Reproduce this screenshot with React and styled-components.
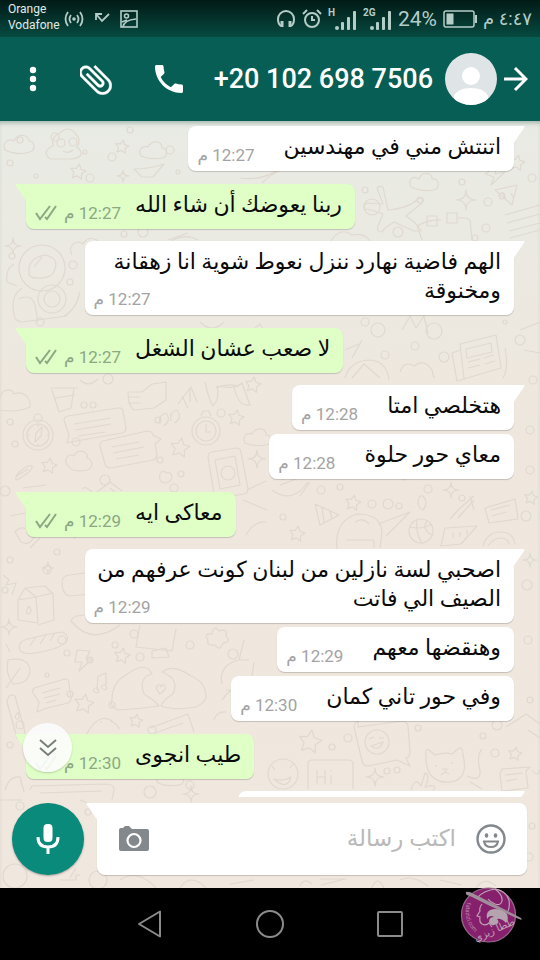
import React from 'react'
import styled, { createGlobalStyle } from 'styled-components'

const colors = {
  header: '#075e54',
  accent: '#0a8a7a',
  incoming: '#ffffff',
  outgoing: '#dfffc7',
  status: '#b4cdc7',
  nav: '#8b8b8b',
  icon: '#83888c',
  doodle: '#e0d9d0',
}

const messages = [
  { lines: ['اتنتش مني في مهندسين'], time: '12:27', first: true },
  { lines: ['ربنا يعوضك أن شاء الله'], time: '12:27', first: true, mine: true },
  { lines: ['الهم فاضية نهارد ننزل نعوط شوية انا زهقانة', 'ومخنوقة'], time: '12:27', first: true },
  { lines: ['لا صعب عشان الشغل'], time: '12:27', first: true, mine: true },
  { lines: ['هتخلصي امتا'], time: '12:28', first: true },
  { lines: ['معاي حور حلوة'], time: '12:28' },
  { lines: ['معاكى ايه'], time: '12:29', first: true, mine: true },
  { lines: ['اصحبي لسة نازلين من لبنان كونت عرفهم من', 'الصيف الي فاتت'], time: '12:29', first: true },
  { lines: ['وهنقضها معهم'], time: '12:29' },
  { lines: ['وفي حور تاني كمان'], time: '12:30' },
  { lines: ['طيب انجوى'], time: '12:30', first: true, mine: true },
]

const dots = [
  [20, 140, 3], [55, 137, 4], [85, 152, 2], [130, 130, 3], [112, 157, 4], [10, 163, 3], [36, 176, 2], [90, 178, 4],
  [170, 150, 4], [178, 172, 2], [372, 207, 8], [365, 190, 3], [420, 200, 3], [462, 182, 3], [488, 202, 4], [502, 196, 3],
  [398, 232, 5], [486, 228, 4], [475, 238, 3], [532, 178, 4], [124, 234, 3], [143, 232, 5], [12, 256, 3], [73, 265, 4],
  [70, 282, 3], [40, 322, 4], [365, 322, 4], [378, 330, 7], [434, 331, 8], [415, 346, 4], [444, 357, 5], [385, 355, 4],
  [505, 322, 2], [520, 340, 5], [10, 422, 3], [15, 444, 3], [84, 405, 3], [93, 405, 3], [108, 379, 5], [158, 420, 3],
  [221, 413, 4], [160, 460, 3], [76, 442, 4], [105, 480, 5], [181, 474, 3], [5, 491, 5], [174, 488, 4], [321, 490, 4],
  [340, 487, 3], [372, 504, 4], [388, 504, 5], [399, 506, 3], [428, 489, 4], [404, 477, 3], [462, 498, 3], [283, 517, 3],
  [526, 516, 5], [530, 470, 4], [10, 560, 3], [57, 552, 3], [47, 570, 4], [5, 590, 3], [62, 640, 4], [90, 660, 3],
  [115, 645, 3], [134, 634, 4], [67, 653, 3], [140, 657, 4], [47, 675, 2], [70, 694, 3], [112, 705, 3], [190, 645, 4],
  [233, 654, 5], [152, 730, 4], [20, 725, 4], [10, 745, 3], [150, 792, 6], [190, 785, 4], [348, 738, 4], [332, 747, 3],
  [418, 728, 3], [497, 725, 5], [483, 736, 3], [387, 771, 3], [397, 770, 3], [495, 753, 4], [530, 700, 3], [532, 826, 3],
  [529, 857, 4], [88, 812, 3], [20, 806, 4], [533, 380, 4], [530, 430, 4], [527, 585, 5], [528, 640, 4],
]

const stars = [
  [78, 172, 8], [122, 147, 7], [49, 466, 8], [180, 448, 10], [236, 418, 8], [353, 503, 8], [297, 534, 8], [122, 656, 8],
  [84, 704, 10], [136, 721, 7], [310, 742, 12], [515, 754, 7], [517, 163, 8], [531, 498, 7], [253, 385, 8],
]

const sparks = [
  [123, 176, 6], [466, 200, 10], [13, 246, 8], [451, 490, 8], [9, 627, 8], [48, 568, 6], [375, 777, 9], [191, 794, 8],
  [257, 459, 9], [150, 336, 8], [530, 560, 7],
]

const starPoints = (cx, cy, r) =>
  Array.from({ length: 10 }, (_, i) => {
    const radius = i % 2 ? r * 0.5 : r
    const angle = (Math.PI / 5) * i - 1.4
    return `${(cx + radius * Math.cos(angle)).toFixed(1)},${(cy + radius * Math.sin(angle)).toFixed(1)}`
  }).join(' ')

const sparkPath = (x, y, r) =>
  `M${x} ${y - r}Q${x} ${y} ${x + r} ${y}Q${x} ${y} ${x} ${y + r}Q${x} ${y} ${x - r} ${y}Q${x} ${y} ${x} ${y - r}Z`

const Doodles = () => (
  <Wallpaper viewBox='0 121 540 767' preserveAspectRatio='xMidYMid slice' aria-hidden='true'>
    {dots.map(([x, y, r]) => (
      <circle key={`${x}-${y}`} cx={x} cy={y} r={r} />
    ))}
    {stars.map(([x, y, r]) => (
      <polygon key={`${x}-${y}`} points={starPoints(x, y, r)} />
    ))}
    {sparks.map(([x, y, r]) => (
      <path key={`${x}-${y}`} d={sparkPath(x, y, r)} />
    ))}
    {/* clouds */}
    <path d='M5 150c-3-8 3-12 9-9c4-9 15-6 15 0c6 0 7 9 1 11q-13 4-25-2Z' />
    <path d='M141 156c-4-7 3-11 7-9c4-8 15-6 14 1c6 0 6 9 0 10q-12 2-21-2Z' />
    <path d='M411 187c-4-8 3-12 8-8c2-8 14-7 13 0c8-1 8 9 2 11q-12 2-23-3Z' />
    <path d='M68 466c-6-8 2-13 6-10c4-8 15-5 13 2c7 2 6 10 0 12q-14 3-19-4Z' />
    <path d='M245 443c-4-7 3-11 7-9c4-8 15-6 14 1c6 0 6 9 0 10q-12 2-21-2Z' />
    <path d='M0 398c2-10 12-10 14-4c10-4 17 4 16 13q-14 6-30 3' />
    <path d='M158 783c-4-7 3-11 7-9c4-8 15-6 14 1c6 0 6 9 0 10q-12 2-21-2Z' />
    <path d='M72 255c-5-10 5-16 11-11c5-9 17-6 17 3c9 1 8 12 2 14M330 242q10-16 22-7q14-3 20 9' />
    {/* face, boat and ribbons */}
    <path d='M60 133q8-8 15 0q7 7 2 14q10 9-4 12H50q-9-8 3-13q-2-9 7-13Z' />
    <circle cx='61' cy='143' r='4' />
    <circle cx='73' cy='142' r='4' />
    <path d='M63 151q6 3 10-1M134 169q15 0 30-5l-11 13h-11ZM240 178q30 4 48-18M350 184q-12 10-34 0M262 183q10-10 22-14' />
    {/* plane */}
    <path d='M377 188q6-5 7 4l4 18q22-2 31-12q7 0 3 5l-16 13q12 8 15 15h-7l-20-9q-10 6-12 10q-6 0-4-6l5-12q-10-4-18-5q-3-5 4-6l14 1Z' />
    {/* paper, pizza slice and stripes */}
    <path d='M417 226q12-7 24-6M458 218q8-1 12 2l2 20M417 226l5 14M427 216h10v10h-10ZM447 213h10v10h-10ZM495 190l22-5l-5 20ZM502 192l4 7M514 199l-3-6' />
    <path d='M505 215l35-10M507 223l33-9M509 231l31-8M510 238l30-8M485 174l12-8l-2 8l10-2l-14 13l3-8Z' />
    {/* astronaut */}
    <circle cx='42' cy='268' r='23' />
    <path d='M29 274q-2-16 16-19q14 3 10 14q-2 10-18 9q-7 0-8-4ZM34 267l8-10' />
    <circle cx='52' cy='299' r='14' />
    <circle cx='52' cy='299' r='8' />
    <path d='M22 288q-12 8-8 26q0 7 8 8l45-6M19 299q12-6 16 6l3 17M14 264q-9 5-7 18l10 4M80 292q-4 18-16 24M160 250q20-20 38-10M168 240l20-7' />
    {/* newspapers, letters */}
    <path d='M460 344l36-9l5 33l-37 11ZM466 349l25-6l1 9l-25 6ZM468 362l12-3M468 368l12-3M484 358l10-3M485 364l10-3M460 350l-8 3l5 28l8-2' />
    <path d='M402 330l8-14l6 12l8-12l4 18M345 378q5-18 26-18q16 2 18 20M352 378l12-14l16 14M520 330l20-8M524 350l16 3M505 348q4 20-2 30' />
    <path d='M400 372q4-12 14-6q10-8 18 4l2 8M345 350l14-6M362 340l-10 18M240 340l20-16l10 18ZM200 322q12 12 24 0' />
    {/* cup, fist, headset */}
    <path d='M52 390l7 22l12-4l3-20M50 388h28M55 398l20-3M80 380q8 8 18-1M128 392h14l10-8l14-2v18l-12 8l-20 2q-6-4-6-18ZM128 397h12M128 403h12' />
    <path d='M178 404l13-17l6 15M182 396l6 12M190 388v14M205 382q4 18 8 24q7-8 4-20q18 4 25-3q5 14 8 22q-12 2-16-18M216 388q10-5 22-2' />
    {/* compass and watch */}
    <circle cx='38' cy='435' r='15' />
    <circle cx='38' cy='435' r='11' />
    <circle cx='38' cy='418' r='4' />
    <path d='M35 442l1-9l6-6l-1 9ZM38 425v2M38 444v2M28 435h2M47 435h2' />
    <circle cx='206' cy='431' r='14' />
    <circle cx='206' cy='431' r='10' />
    <path d='M206 424v8h5M201 416l2-5h6l2 5' />
    {/* chat cards */}
    <path d='M68 416l50-8q4-1 5 3l3 17q0 4-4 5l-46 8l-9 2l2-8l-5-15q0-3 4-4ZM74 424l37-6M75 430l36-6M78 436l27-4' />
    <path d='M103 441l44-10q5 0 6 4l8 4l-6 5l2 11q-1 4-4 5l-42 8q-5 0-6-4l-5-18q0-4 3-5ZM112 447l27-5M113 453l31-6M116 459l23-4' />
    <path d='M160 424q-2-9 6-11q6 8-3 13M171 421q-2-9 6-11q6 8-3 13M16 476q10-12 16-10q2 4-15 14q-4-2 3-6l8-5M160 474q3-5 6-1q5-2 6 4q-1 6-8 6q-6-2-4-9Z' />
    {/* phone */}
    <path d='M212 452l24-4q4 0 5 4l7 37q0 4-4 5l-25 4q-4 0-5-4l-6-37q0-4 4-5ZM215 460l20-4l5 29l-20 4Z' />
    <circle cx='228' cy='473' r='7' />
    <path d='M97 492l13-10l12 9M110 488l10 9M93 493q-8-8-10-4M247 490l19-9M23 488l23-3M243 500l24 10M10 516l15-3M246 535q8-14 20-13' />
    {/* cone, ball, helmet */}
    <path d='M315 504l24 11l-19 10ZM322 507l2 16M330 511l2 8M337 549q-3-28 20-35q24 0 25 18l-2 16M346 540h28v8M378 524l32-12l-24 24M355 522q8-5 14 2' />
    <circle cx='421' cy='531' r='12' />
    <path d='M410 527q12 3 22-3M417 520q-2 12 5 23M427 521q-6 8 5 14M445 528l32-2l-16 18l-20 2ZM453 533v5M460 532v5M467 530v5M450 519l8-9l16-14M458 518l16-18' />
    <path d='M485 508l30-9l3 20l-29 4ZM491 510l19-5M492 516l14-4M470 496l4 14M483 546q4-14 18-14q12 0 14 12M488 546q5-8 13-8q7 0 8 6' />
    <path d='M420 496q-5 10 3 14q6-7 0-14ZM272 490q20 15 36-8M280 485l16-6M300 496l10-14' />
    {/* carton, bottle */}
    <path d='M18 600l18-3l2 26l-20-3ZM36 597l17-4l1 27l-16 5M18 600l7-12l20-2l8 8M25 588l11 9M29 606q-5 7 0 8q4-2 0-8' />
    <path d='M3 575l6 5l-3 5l10-2l-4 12M62 583q0-8 8-8l22-3v22l-24 2q-6-4-6-13ZM71 623q0-6 6-7l15-2M30 548l10-10M15 532q8-9 20 2q-4 13-14 8ZM55 535h10q8-4 10 4' />
    <path d='M20 650q-4-9 12-12q14-4 30-6q7 2 5 9q-6 8-32 12q-12 2-15-3ZM30 646l6-9M40 644l6-9M50 641l5-8M10 652l-4-8M72 622q20 24 48 3M140 625l-4 22l36 4l4-22' />
    <path d='M152 651l14-3l3 9l-17 1ZM244 640l-5 20h10M238 660q-20 6-16 24' />
    <path d='M212 634q2-10 7-3q9-3 7 5q6 6-3 7q-3 9-8 2q-9 1-7-5q-5-7 4-6Z' />
    {/* leaf, note, crayon */}
    <path d='M8 660q22-4 22 12q-2 12-17 12q-8-10-5-24ZM6 688l14-20M77 650l13 1l-4 8h6l-13 12l3-9h-7ZM34 688l31-9q4 0 4 4l2 16q0 3-3 4l-21 5l-10 4l2-10l-6-9q-1-3 1-5ZM42 693l18-5M44 698l16-4M46 703l10-3' />
    <path d='M97 690l1-14l8-3v12M93 690q4-5 6 1q-2 4-6-1M101 687q4-5 6 1q-2 4-6-1M7 702q2-10 8-6l10 36q-2 7-8 6ZM15 717q4-9 4 0q-1 5-4 0' />
    {/* hands holding a heart */}
    <path d='M112 700q0-18 14-25q20-15 26-1q-14 3-8 20q10 6 15 12q-20 3-40 4q-10-3-7-10ZM206 697q0-15-15-21q-18-13-29-4q18 7 11 22q-9 5-12 12q14 5 35 1q9-4 10-10Z' />
    <path d='M160 694q-6-7-2-9q3-1 3 2q2-4 4-1q2 3-5 8ZM226 690h24l4-28M222 700q10-16 26-10M86 735q16-30 34-6M100 722h2M111 722h2M150 728l38-14l6 18M155 733l28-10M214 720q3-9 12-8' />
    {/* sticker, cat, greeting */}
    <path d='M358 727l44-6q5 0 6 5l2 26q0 5-4 6l4 8l-13-6l-29 6q-5 0-6-5l-8-34q0-4 4-6Z' />
    <circle cx='377' cy='742' r='12' />
    <path d='M371 746q8 6 12-4ZM369 739l5-2M379 738h5M308 789v-25q0-4 4-4h36q5 0 5 4v25M317 770v14M317 777h8M325 770v14M331 775v9M331 770v1' />
    <path d='M426 755q-1-7 3-5l6 5q9-3 17-1l7-6q4-1 4 7q6 24-12 27q-26 2-25-27ZM436 765v2M452 762v2M442 769h5l-2 3l-4 3M445 772l4 2M467 776q14 7 13-6q-4-14 2-21M470 782l12 7' />
    <circle cx='283' cy='774' r='15' />
    <path d='M274 779q9 3 17-2q-4 14-17 2ZM275 770l-3-4M290 768l3-4M502 769l28-2l-4 4l2 17l-26 3l-2-17ZM505 775l18-2M506 781l11-2M411 790q4-14 10-4l4-13q6 2 0 14q14-4 8 4M506 727l20-13l14 10' />
    <path d='M30 790l2-4l74-2q8 0 8 6l-2 10M40 793l62-2M5 790q4-14 15-13l4 15M0 800h22M56 774l7-22' />
    {/* strip below the composer */}
    <circle cx='15' cy='876' r='12' />
    <circle cx='98' cy='880' r='9' />
    <path d='M60 880h16v-5h4M120 880q18-12 36 8M180 888q10-16 26 0M230 884l24-4M300 886q4-9 12-2M320 879h26M321 885l24-6M372 888q5-14 12 0M400 880q12-6 28 6M440 880l22 5M476 888q8-12 20-2' />
    <path d='M80 800l14 6M70 878l6-10M532 770q6 8 8 0M528 730l12 8' />
  </Wallpaper>
)

const Signal = ({ label }) => (
  <svg width='29' height='24' viewBox='0 0 29 24' fill='currentColor' direction='ltr' aria-hidden='true'>
    <text x='0' y='9' fontSize='10' fontWeight='700' fontFamily='Roboto, sans-serif'>{label}</text>
    <circle cx='9' cy='21' r='2' />
    <rect x='13' y='15' width='3' height='8' rx='1' />
    <rect x='19' y='10' width='3' height='13' rx='1' />
    <rect x='25' y='4' width='3' height='19' rx='1' />
  </svg>
)

const Ticks = () => (
  <svg width='22' height='16' viewBox='0 0 22 16' fill='none' stroke='#8ca782' strokeWidth='2' aria-label='تم التسليم' role='img'>
    <path d='M1 8l4 6L15 1M10 12l2 2L21 1' />
  </svg>
)

const BubbleTail = ({ mine, color }) => (
  <Tail $mine={mine} $color={color} width='12' height='18' viewBox='0 0 12 18' aria-hidden='true'>
    <path d={mine ? 'M1 0H12V18L1 2Q0 0 1 0Z' : 'M11 0H0V18L11 2Q12 0 11 0Z'} />
  </Tail>
)

const Message = ({ lines, time, first, mine }) => (
  <Bubble $mine={mine} $first={first} $long={lines.length > 1}>
    {first && <BubbleTail mine={mine} color={mine ? colors.outgoing : colors.incoming} />}
    {lines.map((line) => (
      <MessageLine key={line}>{line}</MessageLine>
    ))}
    <Meta $mine={mine}>
      <time>{time} م</time>
      {mine && <Ticks />}
    </Meta>
  </Bubble>
)

const App = () => (
  <Page dir='rtl'>
    <GlobalStyle />
    <StatusBar>
      <StatusGroup $gap={6}>
        <Clock>٤:٤٧ م</Clock>
        <svg width='34' height='18' viewBox='0 0 34 18' fill='none' stroke='currentColor' strokeWidth='1.5' aria-hidden='true'>
          <rect x='1' y='1' width='30' height='16' rx='2' />
          <path d='M33 5v8' strokeWidth='2' />
          <rect x='3.5' y='3.5' width='7' height='11' fill='currentColor' stroke='none' />
        </svg>
        <Percent dir='ltr'>24%</Percent>
        <Signal label='2G' />
        <Signal label='H' />
        <svg width='20' height='20' viewBox='0 0 20 20' fill='none' stroke='currentColor' strokeWidth='2' aria-hidden='true'>
          <circle cx='10' cy='11' r='7' />
          <path d='M10 7v4h3M1 5l4-4M19 5l-4-4' />
        </svg>
        <svg width='20' height='20' viewBox='0 0 20 20' fill='none' stroke='currentColor' strokeWidth='2' aria-hidden='true'>
          <path d='M5 17Q2 15 2 10a8 8 0 0 1 16 0q0 5-3 7' />
          <path d='M6 12v6M14 12v6' strokeWidth='3' />
        </svg>
      </StatusGroup>
      <StatusGroup $gap={10}>
        <svg width='18' height='18' viewBox='0 0 18 18' fill='none' stroke='currentColor' strokeWidth='1.6' aria-hidden='true'>
          <rect x='1' y='1' width='16' height='16' />
          <circle cx='6.5' cy='6' r='2' />
          <path d='M3 17Q4 10 16 9M2 12l5-2' />
        </svg>
        <svg width='16' height='18' viewBox='0 0 16 18' fill='none' stroke='currentColor' strokeWidth='1.8' aria-hidden='true'>
          <path d='M2 10V4h6M2 4l6 7l7-7' />
        </svg>
        <StatusGroup $gap={4}>
          <svg width='20' height='18' viewBox='0 0 20 18' fill='none' stroke='currentColor' strokeWidth='1.8' aria-hidden='true'>
            <circle cx='10' cy='9' r='1.8' fill='currentColor' stroke='none' />
            <path d='M7 5q-3 4 0 8M13 5q3 4 0 8M4 2q-5 7 0 14M16 2q5 7 0 14' />
          </svg>
          <Carriers dir='ltr'>
            <span>Orange</span>
            <span>Vodafone</span>
          </Carriers>
        </StatusGroup>
      </StatusGroup>
    </StatusBar>

    <Header>
      <IconButton aria-label='رجوع'>
        <svg width='25' height='26' viewBox='0 0 25 26' fill='none' stroke='#fff' strokeWidth='3'>
          <path d='M1 13h22M12 2l11 11l-11 11' />
        </svg>
      </IconButton>
      <Avatar viewBox='0 0 52 52' aria-hidden='true'>
        <clipPath id='avatar'>
          <circle cx='26' cy='26' r='26' />
        </clipPath>
        <g clipPath='url(#avatar)'>
          <rect width='52' height='52' fill='#dfe5e7' />
          <circle cx='26' cy='23' r='9' fill='#fff' />
          <path d='M9 52V43Q13 35 26 35T43 43V52Z' fill='#fff' />
        </g>
      </Avatar>
      <Title dir='ltr'>+20 102 698 7506</Title>
      <Actions>
        <IconButton aria-label='اتصال'>
          <svg width='28' height='28' viewBox='3 3 18 18' fill='#fff'>
            <path d='M6.62 10.79c1.44 2.83 3.76 5.14 6.59 6.59l2.2-2.2c.27-.27.67-.36 1.02-.24 1.12.37 2.33.57 3.57.57.55 0 1 .45 1 1V20c0 .55-.45 1-1 1-9.39 0-17-7.61-17-17 0-.55.45-1 1-1h3.5c.55 0 1 .45 1 1 0 1.25.2 2.45.57 3.57.11.35.03.74-.25 1.02l-2.2 2.2z' />
          </svg>
        </IconButton>
        <IconButton aria-label='إرفاق'>
          <svg width='32' height='32' viewBox='3 2.5 19 19' fill='#fff' stroke='#fff' strokeWidth='0.2'>
            <path
              transform='rotate(-45 12.5 12)'
              d='M16.5 6v11.500c0 2.210-1.790 4-4 4s-4-1.790-4-4V5a2.500 2.500 0 0 1 5 0v10.500c0 .55-.45 1-1 1s-1-.45-1-1V6H10v9.500a2.500 2.500 0 0 0 5 0V5c0-2.210-1.790-4-4-4S7 2.790 7 5v12.500c0 3.040 2.460 5.500 5.500 5.500s5.500-2.460 5.500-5.500V6h-1.500z'
            />
          </svg>
        </IconButton>
        <IconButton aria-label='المزيد'>
          <svg width='8' height='26' viewBox='0 0 8 26' fill='#fff'>
            <circle cx='4' cy='4' r='3.2' />
            <circle cx='4' cy='13' r='3.2' />
            <circle cx='4' cy='22' r='3.2' />
          </svg>
        </IconButton>
      </Actions>
    </Header>

    <Chat>
      <Doodles />
      <MessageList>
        {messages.map((message) => (
          <Message key={message.lines[0]} {...message} />
        ))}
        <NextBubble $first>
          <BubbleTail color={colors.incoming} />
        </NextBubble>
      </MessageList>
      <ScrollDown aria-label='الانتقال إلى الأسفل'>
        <svg width='18' height='18' viewBox='0 0 18 18' fill='none' stroke='#77807c' strokeWidth='2'>
          <path d='M1 1l8 7l8-7M1 9l8 7l8-7' />
        </svg>
      </ScrollDown>
      <Composer>
        <InputBox>
          <BubbleTail mine color={colors.incoming} />
          <IconButton aria-label='رموز تعبيرية'>
            <svg width='30' height='30' viewBox='0 0 30 30' fill='none' stroke={colors.icon} strokeWidth='2.4'>
              <circle cx='15' cy='15' r='13.5' />
              <ellipse cx='10.5' cy='11.5' rx='1.8' ry='2.3' fill={colors.icon} stroke='none' />
              <ellipse cx='19.5' cy='11.5' rx='1.8' ry='2.3' fill={colors.icon} stroke='none' />
              <path d='M8 17.5h14q-1 5.5-7 5.5t-7-5.5Z' strokeWidth='2' />
            </svg>
          </IconButton>
          <TextInput aria-label='اكتب رسالة' placeholder='اكتب رسالة' />
          <IconButton aria-label='كاميرا'>
            <svg width='32' height='28' viewBox='0 0 32 28'>
              <path d='M1 5q0-2 2-2h2l2-2h4l3 3h15q2 0 2 2v18q0 2-2 2H3q-2 0-2-2Z' fill={colors.icon} />
              <circle cx='16' cy='15.5' r='6.5' fill='none' stroke='#fff' strokeWidth='2.2' />
            </svg>
          </IconButton>
        </InputBox>
        <MicButton type='button' aria-label='رسالة صوتية'>
          <svg width='24' height='32' viewBox='0 0 24 32' fill='none' stroke='#fff' strokeWidth='3'>
            <rect x='7.5' y='1' width='9' height='18' rx='4' fill='#fff' stroke='none' />
            <path d='M2 14q0 10 10 10t10-10M12 24v7' />
          </svg>
        </MicButton>
      </Composer>
    </Chat>

    <NavBar dir='ltr'>
      <NavButton aria-label='السابق'>
        <svg width='28' height='30' viewBox='0 0 28 30'>
          <path d='M24 2.500V27.500L3 15Z' />
        </svg>
      </NavButton>
      <NavButton aria-label='الرئيسية'>
        <svg width='30' height='30' viewBox='0 0 30 30'>
          <circle cx='15' cy='15' r='13' />
        </svg>
      </NavButton>
      <NavButton aria-label='التطبيقات'>
        <svg width='28' height='28' viewBox='0 0 28 28'>
          <rect x='2' y='2' width='24' height='24' rx='1' />
        </svg>
      </NavButton>
      <Watermark viewBox='0 0 64 60' aria-hidden='true'>
        <circle cx='28.5' cy='28' r='27' fill='#86206c' stroke='#9a6c8e' strokeWidth='1.2' />
        <g fill='none' stroke='#bf9fb5' strokeWidth='1.200'>
          <path d='M17 11Q24 3 36 2Q46 4 49 13Q50 20 48 24M35 2Q43 8 42 14Q41 19 35 17Q30 15 28 12' />
          <path d='M22 17q-3 4-2 7l-3 5l3 1q-1 5 2 7q4 2 7-1l3 4' />
        </g>
        <path d='M6 5Q9 4 14 7Q34 17 61 31Q63 34 59 32Q33 21 10 9Q5 8 6 5Z' fill='#a08f9b' />
        <path d='M27 32q-2-9 7-10q8 0 13 5q2 6-1 9q-5-5-9-4q3 3 0 5q-6 3-8-2q0-5 5-5q-4-3-7 2Z' fill='#b5a3b0' />
        <path id='rim' d='M7 15Q1 38 22 50' fill='none' />
        <text fontFamily='Roboto, sans-serif' fontSize='6' fill='#b78aab' direction='ltr'>
          <textPath href='#rim'>fatazizi.com</textPath>
        </text>
        <text x='35' y='46' direction='rtl' fontFamily='"DejaVu Sans", sans-serif' fontSize='10' fill='#c4a5ba' textAnchor='middle' transform='rotate(-24 35 44)'>ططا زيزي</text>
      </Watermark>
    </NavBar>
  </Page>
)

const GlobalStyle = createGlobalStyle`
  * {
    box-sizing: border-box;
  }

  body {
    margin: 0;
    font-family: Roboto, 'Noto Sans', 'DejaVu Sans', sans-serif;
  }
`

const Page = styled.div`
  display: flex;
  flex-direction: column;
  height: 100vh;
`

const StatusBar = styled.div`
  display: flex;
  align-items: center;
  justify-content: space-between;
  height: 37px;
  padding: 0 8px;

  color: ${colors.status};
  background: linear-gradient(#021a16, #064a40);
`

const StatusGroup = styled.div`
  display: flex;
  align-items: center;
  gap: ${({ $gap }) => $gap}px;
`

const Clock = styled.span`
  font-size: 18px;
  line-height: 24px;
`

const Percent = styled.span`
  font-size: 21px;
  line-height: 24px;
`

const Carriers = styled.div`
  display: flex;
  flex-direction: column;
  padding-bottom: 3px;

  font-size: 12px;
  line-height: 16px;
  color: #e3ebe9;
`

const Header = styled.header`
  display: flex;
  align-items: center;
  height: 84px;
  padding: 0 12px;
  gap: 6px;

  background-color: ${colors.header};
`

const IconButton = styled.button.attrs({ type: 'button' })`
  display: flex;
  align-items: center;
  justify-content: center;
  flex-shrink: 0;
  padding: 0;

  border: 0;
  background: none;
  cursor: pointer;
`

const Avatar = styled.svg`
  width: 52px;
  height: 52px;
  flex-shrink: 0;
`

const Title = styled.h1`
  margin: 0 6px;
  white-space: nowrap;

  font-size: 27px;
  font-weight: 500;
  line-height: 32px;
  color: #fff;
`

const Actions = styled.div`
  display: flex;
  align-items: center;
  justify-content: space-between;
  flex: 1;
  padding: 0 19px 0 17px;
`

const Chat = styled.main`
  position: relative;
  display: flex;
  flex-direction: column;
  flex: 1;
  min-height: 0;

  background: linear-gradient(#e8ebe4, #efe7de 40%, #f0e7df);
  box-shadow: inset 0 4px 4px -2px rgba(0, 60, 50, 0.3);
`

const Wallpaper = styled.svg`
  position: absolute;
  top: 0;
  left: 0;
  width: 100%;
  height: 100%;

  fill: none;
  stroke: ${colors.doodle};
  stroke-width: 1.2;
  stroke-linejoin: round;
`

const MessageList = styled.section`
  position: relative;
  display: flex;
  flex-direction: column;
  align-items: flex-start;
  flex: 1;
  min-height: 0;
  padding: 5px 26px 0;
  overflow: hidden;
`

const tailCorner = ({ $mine, $first }) => {
  if (!$first) return '8px'
  return $mine ? '0 8px 8px 8px' : '8px 0 8px 8px'
}

const Bubble = styled.article`
  position: relative;
  display: flex;
  flex-wrap: ${({ $long }) => ($long ? 'wrap' : 'nowrap')};
  flex-shrink: 0;
  align-items: flex-end;
  align-self: ${({ $mine }) => ($mine ? 'flex-end' : 'flex-start')};
  justify-content: space-between;
  column-gap: ${({ $mine }) => ($mine ? 14 : 29)}px;
  width: ${({ $long }) => ($long ? '88%' : 'auto')};
  margin-top: ${({ $mine, $first }) => ($mine ? 13 : $first ? 12 : 4)}px;
  padding: 6px 13px 10px 9px;

  border-radius: ${tailCorner};
  background-color: ${({ $mine }) => ($mine ? colors.outgoing : colors.incoming)};
  box-shadow: 0 1px 1px rgba(0, 0, 0, 0.18);

  &:first-child {
    margin-top: 0;
  }
`

const NextBubble = styled(Bubble)`
  width: 276px;
  height: 45px;
`

const Tail = styled.svg`
  position: absolute;
  top: 0;
  ${({ $mine }) => ($mine ? 'left' : 'right')}: -11px;

  fill: ${({ $color }) => $color};
`

const MessageLine = styled.span`
  white-space: nowrap;

  font-size: 22px;
  line-height: 29px;
  color: #0a0a0a;
`

const Meta = styled.div`
  display: flex;
  align-items: center;
  gap: 7px;
  margin-bottom: -2px;

  font-size: 17px;
  line-height: 16px;
  white-space: nowrap;
  color: ${({ $mine }) => ($mine ? '#8ca782' : '#a3a3a3')};
`

const ScrollDown = styled(IconButton)`
  position: absolute;
  bottom: 116px;
  left: 23px;
  width: 49px;
  height: 49px;

  border-radius: 50%;
  background-color: rgba(252, 252, 252, 0.92);
  box-shadow: 0 1px 2px rgba(0, 0, 0, 0.2);
`

const Composer = styled.form`
  position: relative;
  display: flex;
  align-items: center;
  gap: 13px;
  padding: 6px 13px 13px 12px;
`

const InputBox = styled.div`
  position: relative;
  display: flex;
  align-items: center;
  flex: 1;
  min-width: 0;
  gap: 20px;
  height: 72px;
  padding: 0 21px;

  border-radius: 0 8px 8px 8px;
  background-color: ${colors.incoming};
  box-shadow: 0 1px 1px rgba(0, 0, 0, 0.18);
`

const TextInput = styled.input`
  flex: 1;
  min-width: 0;
  padding: 0;
  border: 0;
  outline: 0;

  font-family: inherit;
  font-size: 23px;
  line-height: 32px;

  &::placeholder {
    color: #b9b9b9;
    opacity: 1;
  }
`

const MicButton = styled(IconButton)`
  width: 72px;
  height: 72px;

  border-radius: 50%;
  background-color: ${colors.accent};
  box-shadow: 0 1px 2px rgba(0, 0, 0, 0.3);
`

const NavBar = styled.nav`
  position: relative;
  display: flex;
  align-items: center;
  justify-content: center;
  gap: 60px;
  height: 72px;

  background-color: #000;
`

const NavButton = styled(IconButton)`
  width: 60px;
  height: 60px;

  & svg {
    fill: none;
    stroke: ${colors.nav};
    stroke-width: 2;
    stroke-linejoin: round;
  }
`

const Watermark = styled.svg`
  position: absolute;
  top: -1px;
  right: 16px;
  width: 64px;
  height: 60px;
`

export default App
